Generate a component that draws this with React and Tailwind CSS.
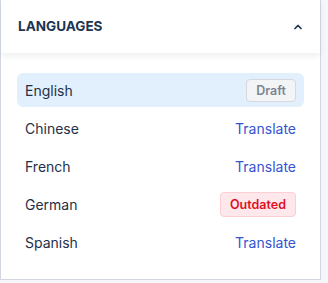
import React from 'react';

const languages = [
  { name: 'English', status: 'draft', active: true },
  { name: 'Chinese', status: 'translate' },
  { name: 'French', status: 'translate' },
  { name: 'German', status: 'outdated' },
  { name: 'Spanish', status: 'translate' },
];

const StatusTag = ({ status }) => {
  if (status === 'draft') {
    return (
      <span className="rounded border border-[#d5d9df] bg-[#f3f4f6] px-[9px] py-[2px] text-[12.5px] font-semibold leading-[17px] text-[#7b8594]">
        Draft
      </span>
    );
  }
  if (status === 'outdated') {
    return (
      <span className="rounded border border-[#fccdd3] bg-[#ffe8ec] px-[9px] py-[3px] text-[12.5px] font-semibold leading-[17px] text-[#e0101e]">
        Outdated
      </span>
    );
  }
  return <span className="text-[14px] font-normal text-[#3553d3]">Translate</span>;
};

export default function App() {
  return (
    <div className="flex h-[283px] w-[328px] bg-[#f5f6f9] font-['Inter',sans-serif]">
      <div className="flex h-[280px] w-[321px] flex-col border-x border-b border-[#d3d8e0] bg-white">
        <div className="relative z-10 flex h-[53px] shrink-0 items-center justify-between bg-white pl-[17px] pr-[16px] shadow-[0_3px_6px_rgba(30,50,90,0.08)]">
          <h3 className="text-[13.5px] font-bold uppercase text-[#1c3550]">Languages</h3>
          <svg width="12" height="12" viewBox="0 0 24 24" fill="none" stroke="#1c3550" strokeWidth="3.5" strokeLinecap="round" strokeLinejoin="round">
            <path d="M6 15l6-6 6 6" />
          </svg>
        </div>
        <ul className="flex flex-col gap-[4px] px-[16px] pt-[20px]">
          {languages.map(lang => (
            <li
              key={lang.name}
              className={`flex h-[34px] items-center justify-between rounded-md pl-[8px] pr-[8px] ${lang.active ? 'bg-[#e2effd]' : ''}`}
            >
              <span className="text-[14px] text-[#1f3147]">{lang.name}</span>
              <StatusTag status={lang.status} />
            </li>
          ))}
        </ul>
      </div>
    </div>
  );
}
